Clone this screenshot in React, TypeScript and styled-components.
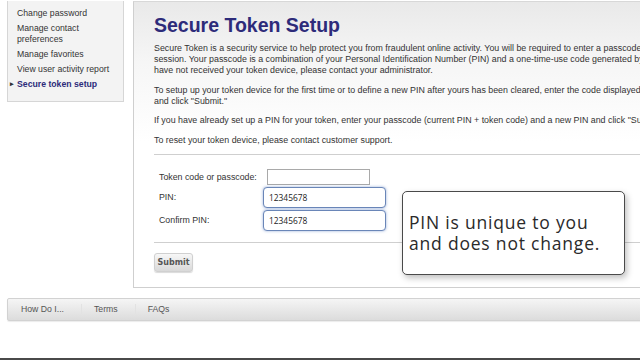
import React from "react";
import styled, { createGlobalStyle } from "styled-components";

const Global = createGlobalStyle`
  html, body { margin: 0; padding: 0; background: #fff; }
  body { font-family: "Liberation Sans", Arial, sans-serif; }
`;

const Page = styled.div`
  width: 640px;
  height: 360px;
  box-sizing: border-box;
  overflow: hidden;
  position: relative;
  border-bottom: 2px solid #4a4a4a;
  background: #fff;
`;

const TopRow = styled.div`
  display: flex;
  align-items: flex-start;
  gap: 9px;
  padding: 1px 0 0 7px;
`;

const Sidebar = styled.nav`
  flex: 0 0 117px;
  box-sizing: border-box;
  border: 1px solid #d6d6d6;
  border-top: none;
  background: #f3f3f3;
  padding: 7px 0 12px 9px;
  display: flex;
  flex-direction: column;
  gap: 4.6px;
`;

const NavItem = styled.a<{ $active?: boolean }>`
  display: block;
  font-size: 8.7px;
  line-height: 10.5px;
  color: ${(p) => (p.$active ? "#2d2b7a" : "#333")};
  font-weight: ${(p) => (p.$active ? "bold" : "normal")};
  text-decoration: none;
  position: relative;
  &::before {
    content: ${(p) => (p.$active ? '"▸"' : "none")};
    position: absolute;
    left: -7px;
    top: 0;
    font-size: 7px;
    color: #333;
  }
`;

const Main = styled.main`
  flex: 0 0 620px;
  box-sizing: border-box;
  border: 1px solid #cfcfcf;
  border-top: 1px solid #d8d8d8;
  background: linear-gradient(#e9e9e9 0px, #f6f6f6 60px, #ffffff 140px);
  padding: 12px 0 15px 20px;
  overflow: hidden;
`;

const Title = styled.h1`
  margin: 0 0 7px;
  font-size: 19.5px;
  line-height: 22px;
  font-weight: bold;
  color: #2d2b7a;
`;

const Para = styled.p`
  margin: 0 0 8.5px;
  font-size: 8.85px;
  line-height: 11px;
  color: #333;
  white-space: nowrap;
  &:last-of-type {
    margin-bottom: 8px;
  }
`;

const Rule = styled.hr`
  border: none;
  border-top: 1px solid #cfcfcf;
  margin: 0;
`;

const Form = styled.div`
  display: grid;
  grid-template-columns: 104px auto;
  align-items: center;
  row-gap: 2px;
  padding: 14px 0 11px 5px;
`;

const Label = styled.label`
  font-size: 8.8px;
  color: #333;
`;

const PlainInput = styled.div`
  margin-left: 4px;
  width: 103px;
  height: 16px;
  box-sizing: border-box;
  border: 1px solid #a9a9a9;
  background: #fff;
`;

const FocusInput = styled.div`
  width: 123px;
  height: 21px;
  box-sizing: border-box;
  border: 1.5px solid #6a86b8;
  border-radius: 4px;
  background: #fff;
  box-shadow: 0 0 3px rgba(80, 120, 190, 0.6);
  display: flex;
  align-items: center;
  padding-left: 5px;
  font-family: "Open Sans", sans-serif;
  font-size: 8.4px;
  color: #222;
`;

const SubmitButton = styled.button`
  margin-top: 10px;
  width: 39px;
  height: 19px;
  border: 1px solid #d0d0d0;
  border-radius: 3px;
  background: linear-gradient(#f7f7f7, #d9d9d9);
  box-shadow: 0 1px 1px rgba(0, 0, 0, 0.15);
  font-family: "DejaVu Sans", sans-serif;
  font-weight: bold;
  font-size: 8px;
  color: #555;
  padding: 0;
`;

const Tooltip = styled.div`
  position: absolute;
  left: 402px;
  top: 191px;
  width: 223px;
  height: 84px;
  box-sizing: border-box;
  border: 1.5px solid #4a4a4a;
  border-radius: 5px;
  background: #fff;
  box-shadow: 2px 3px 6px rgba(0, 0, 0, 0.25);
  padding: 20px 0 0 6px;
  font-family: "Open Sans", sans-serif;
  font-size: 17.5px;
  line-height: 21px;
  color: #2a2a2a;
  letter-spacing: 0.8px;
`;

const Footer = styled.footer`
  margin: 10px 0 0 7px;
  width: 660px;
  height: 23px;
  box-sizing: border-box;
  border: 1px solid #d2d2d2;
  border-radius: 2px;
  background: linear-gradient(#f5f5f5, #dcdcdc);
  box-shadow: 0 1px 1px rgba(0, 0, 0, 0.08);
  display: flex;
  align-items: center;
  padding-left: 13px;
`;

const FootLink = styled.a`
  font-size: 8.7px;
  color: #555;
  text-decoration: none;
  padding-right: 17px;
  & + & {
    padding-left: 12px;
    border-left: 1px solid #e2e2e2;
  }
`;

export default function App() {
  return (
    <>
      <Global />
      <Page>
        <TopRow>
          <Sidebar>
            <NavItem>Change password</NavItem>
            <NavItem>
              Manage contact
              <br />
              preferences
            </NavItem>
            <NavItem>Manage favorites</NavItem>
            <NavItem>View user activity report</NavItem>
            <NavItem $active>Secure token setup</NavItem>
          </Sidebar>
          <Main>
            <Title>Secure Token Setup</Title>
            <Para>
              Secure Token is a security service to help protect you from fraudulent online activity. You will be required to enter a passcode each time you log in to a
              <br />
              session. Your passcode is a combination of your Personal Identification Number (PIN) and a one-time-use code generated by your token device. If you
              <br />
              have not received your token device, please contact your administrator.
            </Para>
            <Para>
              To setup up your token device for the first time or to define a new PIN after yours has been cleared, enter the code displayed on your token device
              <br />
              and click "Submit."
            </Para>
            <Para>
              If you have already set up a PIN for your token, enter your passcode (current PIN + token code) and a new PIN and click "Submit."
            </Para>
            <Para>To reset your token device, please contact customer support.</Para>
            <Rule />
            <Form>
              <Label>Token code or passcode:</Label>
              <PlainInput />
              <Label>PIN:</Label>
              <FocusInput>12345678</FocusInput>
              <Label>Confirm PIN:</Label>
              <FocusInput>12345678</FocusInput>
            </Form>
            <Rule />
            <SubmitButton>Submit</SubmitButton>
          </Main>
        </TopRow>
        <Footer>
          <FootLink>How Do I...</FootLink>
          <FootLink>Terms</FootLink>
          <FootLink>FAQs</FootLink>
        </Footer>
        <Tooltip>
          PIN is unique to you
          <br />
          and does not change.
        </Tooltip>
      </Page>
    </>
  );
}
